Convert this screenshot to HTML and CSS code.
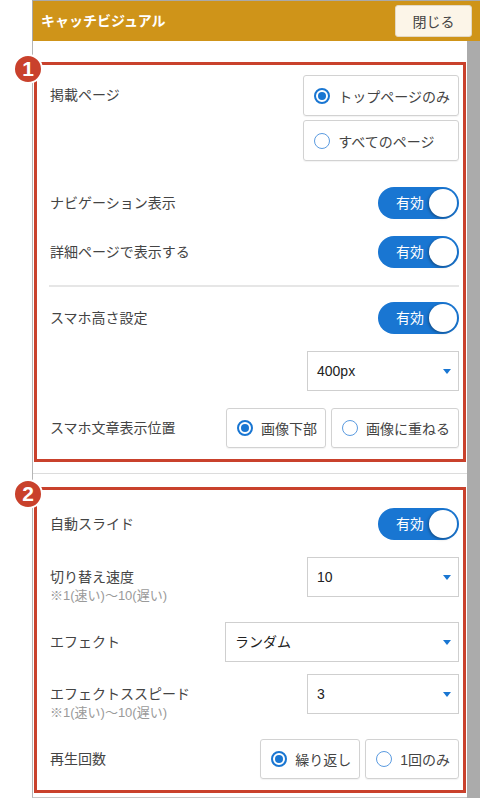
FILE: index.html
```html
<!DOCTYPE html>
<html lang="ja">
<head>
<meta charset="utf-8">
<title>キャッチビジュアル</title>
<link rel="stylesheet" href="styles.css">
</head>
<body>
<div class="app">
  <header class="header">
    <h1 class="title">キャッチビジュアル</h1>
    <button class="close" type="button">閉じる</button>
  </header>
  <div class="body">
    <div class="panel">
      <section class="group">
        <div class="row row--top">
          <div class="label">掲載ページ</div>
          <div class="radio-stack">
            <div class="opt"><span class="radio radio--on"></span>トップページのみ</div>
            <div class="opt"><span class="radio"></span>すべてのページ</div>
          </div>
        </div>
        <div class="row row--spaced">
          <div class="label">ナビゲーション表示</div>
          <div class="toggle">有効</div>
        </div>
        <div class="row">
          <div class="label">詳細ページで表示する</div>
          <div class="toggle">有効</div>
        </div>
        <div class="divider"></div>
        <div class="row">
          <div class="label">スマホ高さ設定</div>
          <div class="toggle">有効</div>
        </div>
        <div class="row row--end">
          <div class="select">400px</div>
        </div>
        <div class="row">
          <div class="label">スマホ文章表示位置</div>
          <div class="radio-row">
            <div class="opt"><span class="radio radio--on"></span>画像下部</div>
            <div class="opt"><span class="radio"></span>画像に重ねる</div>
          </div>
        </div>
        <span class="badge">1</span>
      </section>
      <div class="sep"></div>
      <section class="group group--second">
        <div class="row">
          <div class="label">自動スライド</div>
          <div class="toggle">有効</div>
        </div>
        <div class="row row--top">
          <div class="label">切り替え速度<span class="sub">※1(速い)〜10(遅い)</span></div>
          <div class="select">10</div>
        </div>
        <div class="row">
          <div class="label">エフェクト</div>
          <div class="select select--wide">ランダム</div>
        </div>
        <div class="row row--top row--tight">
          <div class="label">エフェクトススピード<span class="sub">※1(速い)〜10(遅い)</span></div>
          <div class="select">3</div>
        </div>
        <div class="row">
          <div class="label">再生回数</div>
          <div class="radio-row">
            <div class="opt"><span class="radio radio--on"></span>繰り返し</div>
            <div class="opt"><span class="radio"></span>1回のみ</div>
          </div>
        </div>
        <span class="badge">2</span>
      </section>
    </div>
    <div class="scrollbar"></div>
  </div>
</div>
</body>
</html>
```

FILE: styles.css
```css
* { box-sizing: border-box; }

body {
  margin: 0;
  background: #fff;
  font-family: "Liberation Sans", "Noto Sans CJK JP", sans-serif;
  color: #444;
}

.app {
  margin-left: 32px;
  width: 448px;
}

.header {
  height: 41px;
  background: #cf9419;
  border-top: 1px solid #a9a9a9;
  border-left: 1px solid #a9a9a9;
  display: flex;
  align-items: center;
  justify-content: space-between;
  padding: 0 8px;
}

.title {
  margin: 0;
  font-size: 14px;
  line-height: 20px;
  font-weight: bold;
  color: #fff;
}

.close {
  width: 77px;
  height: 32px;
  padding: 0;
  background: #fcf5e8;
  border: 1px solid #e3d9c5;
  border-radius: 3px;
  font-family: inherit;
  font-size: 14px;
  color: #444;
}

.body {
  display: flex;
}

.panel {
  flex: 1;
  border-left: 1px solid #b5b5b5;
  border-bottom: 1px solid #c8c8c8;
  padding: 21px 1px 4px;
}

.scrollbar {
  width: 13px;
  background: #ababab;
}

.group {
  position: relative;
  border: 3px solid #c9412c;
  padding: 10px 4px 11px 13px;
}

.group--second {
  padding-top: 18px;
}

.sep {
  height: 1px;
  background: #dcdcdc;
  margin: 11px -1px 13px;
}

.badge {
  position: absolute;
  left: -24px;
  top: -11px;
  width: 30px;
  height: 30px;
  border-radius: 50%;
  background: #c9412c;
  border: 2px solid #fff;
  color: #fff;
  font-family: "Liberation Sans", sans-serif;
  font-weight: bold;
  font-size: 21px;
  line-height: 26px;
  text-align: center;
}

.row {
  display: flex;
  justify-content: space-between;
  align-items: center;
  margin-top: 17px;
}

.row:first-child { margin-top: 0; }
.row--spaced { margin-top: 26px; }
.row--tight { margin-top: 12px; }
.row--end { justify-content: flex-end; }
.row--top { align-items: flex-start; }

.label {
  font-size: 14px;
  line-height: 20px;
  color: #444;
}

.row--top .label { padding-top: 10px; }

.sub {
  display: block;
  font-size: 13px;
  line-height: 18px;
  color: #9a9a9a;
}

.divider {
  height: 2px;
  background: #e6e6e6;
  margin: 17px 0 0 -1px;
}

.divider + .row { margin-top: 15px; }

.toggle {
  position: relative;
  width: 81px;
  height: 32px;
  border-radius: 16px;
  background: #1976d2;
  color: #fff;
  font-size: 14px;
  line-height: 32px;
  padding-left: 18px;
}

.toggle::after {
  content: "";
  position: absolute;
  right: 2px;
  top: 2px;
  width: 28px;
  height: 28px;
  border-radius: 50%;
  background: #fff;
  box-shadow: -1px 1px 3px rgba(0, 0, 0, 0.35);
}

.select {
  position: relative;
  width: 152px;
  height: 40px;
  border: 1px solid #cfcfcf;
  padding-left: 9px;
  font-size: 14px;
  line-height: 38px;
  color: #222;
}

.select--wide { width: 234px; }

.select::after {
  content: "";
  position: absolute;
  right: 7px;
  top: 17px;
  border-left: 4px solid transparent;
  border-right: 4px solid transparent;
  border-top: 5px solid #1976d2;
}

.radio-stack {
  display: flex;
  flex-direction: column;
  gap: 4px;
}

.radio-row {
  display: flex;
  gap: 5px;
}

.opt {
  display: flex;
  align-items: center;
  gap: 8px;
  height: 40px;
  border: 1px solid #d2d2d2;
  border-radius: 3px;
  padding: 0 8px 0 10px;
  font-size: 14px;
  color: #444;
  white-space: nowrap;
  box-shadow: 0 1px 1px rgba(0, 0, 0, 0.05);
}

.radio-stack .opt { height: 41px; }

.radio {
  width: 16px;
  height: 16px;
  border-radius: 50%;
  border: 1.5px solid #5b9be0;
  display: flex;
  align-items: center;
  justify-content: center;
  flex: none;
}

.radio--on {
  border: 2px solid #1976d2;
}

.radio--on::after {
  content: "";
  width: 8px;
  height: 8px;
  border-radius: 50%;
  background: #1976d2;
}
```
